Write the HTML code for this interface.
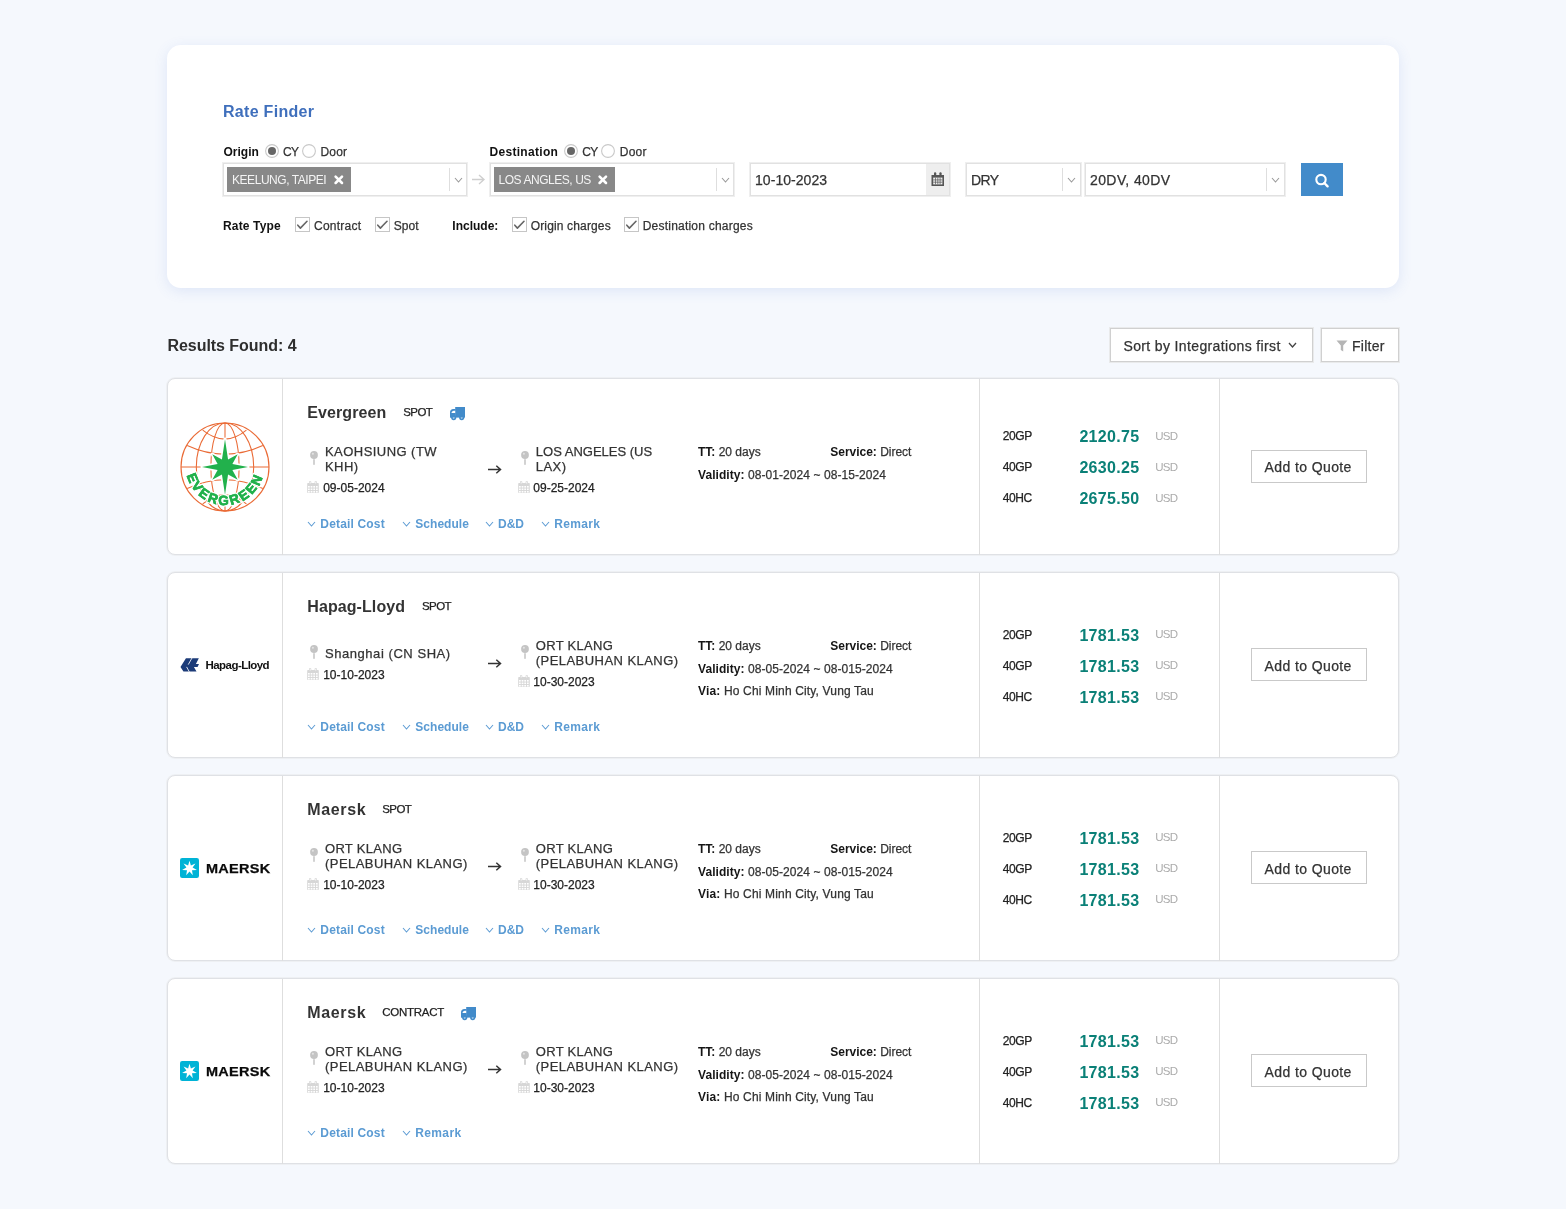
<!DOCTYPE html>
<html><head><meta charset="utf-8"><title>Rate Finder</title>
<style>
html,body{margin:0;padding:0;}
body{width:1566px;height:1209px;background:#f5f8fd;position:relative;overflow:hidden;font-family:"Liberation Sans", sans-serif;}
.t{position:absolute;white-space:nowrap;font-family:"Liberation Sans", sans-serif;}
.r{-webkit-text-stroke:0.25px currentColor;}
.r b{-webkit-text-stroke:0;}
.t b{color:#151515;}
svg{overflow:visible;}
</style></head><body>
<div style="position:absolute;left:0;top:0;width:1566px;height:1209px;will-change:transform"><div style="position:absolute;left:167px;top:45px;width:1232px;height:243px;background:#fff;border-radius:14px;box-shadow:0 3px 14px rgba(70,110,210,0.13);"></div><div class="t" style="left:223.00px;top:103.96px;font-size:16px;line-height:16px;font-weight:700;color:#3f6fbc;letter-spacing:0.3px;">Rate Finder</div><div class="t" style="left:223.50px;top:146.04px;font-size:12px;line-height:12px;font-weight:700;color:#111;">Origin</div><svg style="position:absolute;left:265px;top:143.7px" width="14" height="14" viewBox="0 0 14 14"><circle cx="7" cy="7" r="6.4" fill="#fff" stroke="#c9c9c9" stroke-width="1.1"/><circle cx="7" cy="7" r="4" fill="#666"/></svg><div class="t r" style="left:283.00px;top:146.04px;font-size:12px;line-height:12px;font-weight:400;color:#333;letter-spacing:-0.6px;">CY</div><svg style="position:absolute;left:302px;top:143.7px" width="14" height="14" viewBox="0 0 14 14"><circle cx="7" cy="7" r="6.4" fill="#fff" stroke="#c9c9c9" stroke-width="1.1"/></svg><div class="t r" style="left:320.50px;top:146.04px;font-size:12px;line-height:12px;font-weight:400;color:#333;letter-spacing:0.2px;">Door</div><div class="t" style="left:489.50px;top:146.04px;font-size:12px;line-height:12px;font-weight:700;color:#111;letter-spacing:0.3px;">Destination</div><svg style="position:absolute;left:564.2px;top:143.7px" width="14" height="14" viewBox="0 0 14 14"><circle cx="7" cy="7" r="6.4" fill="#fff" stroke="#c9c9c9" stroke-width="1.1"/><circle cx="7" cy="7" r="4" fill="#666"/></svg><div class="t r" style="left:582.30px;top:146.04px;font-size:12px;line-height:12px;font-weight:400;color:#333;letter-spacing:-0.6px;">CY</div><svg style="position:absolute;left:601.3px;top:143.7px" width="14" height="14" viewBox="0 0 14 14"><circle cx="7" cy="7" r="6.4" fill="#fff" stroke="#c9c9c9" stroke-width="1.1"/></svg><div class="t r" style="left:619.80px;top:146.04px;font-size:12px;line-height:12px;font-weight:400;color:#333;letter-spacing:0.2px;">Door</div><div style="position:absolute;left:223px;top:163px;width:244px;height:33px;box-sizing:border-box;border:1px solid #e1e1e1;box-shadow:0 0 0 1px #efefef;background:#fff;"></div><div style="position:absolute;left:449px;top:168.0px;width:1px;height:23px;background:#dedede;"></div><svg style="position:absolute;left:454px;top:176.8px" width="9" height="6" viewBox="0 0 9 6"><polyline points="1,1 4.5,5 8,1" fill="none" stroke="#9a9a9a" stroke-width="1.1"/></svg><div style="position:absolute;left:227px;top:166.5px;width:124px;height:25.5px;background:#888;"></div><div class="t" style="left:232.00px;top:174.44px;font-size:12px;line-height:12px;font-weight:400;color:#f4f4f4;letter-spacing:-0.45px;">KEELUNG, TAIPEI</div><svg style="position:absolute;left:334.2px;top:175.4px" width="9.6" height="9.6" viewBox="0 0 9.6 9.6"><path d="M1.6,1.6 L8.0,8.0 M8.0,1.6 L1.6,8.0" stroke="#fff" stroke-width="2.6" stroke-linecap="round"/></svg><svg style="position:absolute;left:470px;top:173px" width="17" height="13" viewBox="0 0 17 13"><path d="M2,6.5 H14 M9,2 L14,6.5 L9,11" fill="none" stroke="#cfcfcf" stroke-width="1.4"/></svg><div style="position:absolute;left:490px;top:163px;width:244px;height:33px;box-sizing:border-box;border:1px solid #e1e1e1;box-shadow:0 0 0 1px #efefef;background:#fff;"></div><div style="position:absolute;left:716px;top:168.0px;width:1px;height:23px;background:#dedede;"></div><svg style="position:absolute;left:721px;top:176.8px" width="9" height="6" viewBox="0 0 9 6"><polyline points="1,1 4.5,5 8,1" fill="none" stroke="#9a9a9a" stroke-width="1.1"/></svg><div style="position:absolute;left:494px;top:166.5px;width:120.5px;height:25.5px;background:#888;"></div><div class="t" style="left:498.50px;top:174.44px;font-size:12px;line-height:12px;font-weight:400;color:#f4f4f4;letter-spacing:-0.45px;">LOS ANGLES, US</div><svg style="position:absolute;left:597.6px;top:175.4px" width="9.6" height="9.6" viewBox="0 0 9.6 9.6"><path d="M1.6,1.6 L8.0,8.0 M8.0,1.6 L1.6,8.0" stroke="#fff" stroke-width="2.6" stroke-linecap="round"/></svg><div style="position:absolute;left:750px;top:163px;width:200px;height:33px;box-sizing:border-box;border:1px solid #e1e1e1;box-shadow:0 0 0 1px #efefef;background:#fff;"></div><div style="position:absolute;left:926px;top:164px;width:23px;height:31px;background:#eeeeee;"></div><div class="t r" style="left:755.00px;top:172.75px;font-size:14px;line-height:14px;font-weight:400;color:#333;letter-spacing:0.05px;">10-10-2023</div><svg style="position:absolute;left:931.3px;top:172px" width="14" height="15" viewBox="0 0 14 15"><path d="M0.5,3 H13 V14 H0.5 Z" fill="#555"/><rect x="2.2" y="5.6" width="9.2" height="6.8" fill="#eee"/><path d="M2.2,7.9 H11.4 M2.2,10.2 H11.4 M4.5,5.6 V12.4 M6.8,5.6 V12.4 M9.1,5.6 V12.4" stroke="#555" stroke-width="0.7"/><rect x="3" y="0.3" width="2.2" height="3.6" rx="1" fill="#555"/><rect x="8.4" y="0.3" width="2.2" height="3.6" rx="1" fill="#555"/></svg><div style="position:absolute;left:966px;top:163px;width:115px;height:33px;box-sizing:border-box;border:1px solid #e1e1e1;box-shadow:0 0 0 1px #efefef;background:#fff;"></div><div style="position:absolute;left:1062px;top:168.0px;width:1px;height:23px;background:#dedede;"></div><svg style="position:absolute;left:1067px;top:176.8px" width="9" height="6" viewBox="0 0 9 6"><polyline points="1,1 4.5,5 8,1" fill="none" stroke="#9a9a9a" stroke-width="1.1"/></svg><div class="t r" style="left:971.00px;top:173.15px;font-size:14px;line-height:14px;font-weight:400;color:#333;letter-spacing:-0.6px;">DRY</div><div style="position:absolute;left:1085px;top:163px;width:200px;height:33px;box-sizing:border-box;border:1px solid #e1e1e1;box-shadow:0 0 0 1px #efefef;background:#fff;"></div><div style="position:absolute;left:1266px;top:168.0px;width:1px;height:23px;background:#dedede;"></div><svg style="position:absolute;left:1271px;top:176.8px" width="9" height="6" viewBox="0 0 9 6"><polyline points="1,1 4.5,5 8,1" fill="none" stroke="#9a9a9a" stroke-width="1.1"/></svg><div class="t r" style="left:1090.00px;top:173.15px;font-size:14px;line-height:14px;font-weight:400;color:#333;letter-spacing:0.4px;">20DV, 40DV</div><div style="position:absolute;left:1301px;top:163.3px;width:42px;height:33px;background:#428bca;"></div><svg style="position:absolute;left:1312px;top:171px" width="20" height="20" viewBox="0 0 20 20"><circle cx="9" cy="8.6" r="4.7" fill="none" stroke="#fff" stroke-width="2.1"/><path d="M12.3,12 L15.6,15.3" stroke="#fff" stroke-width="2.4" stroke-linecap="round"/></svg><div class="t" style="left:223.00px;top:219.84px;font-size:12px;line-height:12px;font-weight:700;color:#111;letter-spacing:0.15px;">Rate Type</div><svg style="position:absolute;left:294.8px;top:216.8px" width="15" height="15" viewBox="0 0 15 15"><rect x="0.5" y="0.5" width="14" height="14" fill="#fff" stroke="#c6c6c6" stroke-width="1"/><polyline points="2.8,8.2 5.4,11.1 12,4.3" fill="none" stroke="#666" stroke-width="1.6" stroke-linecap="round" stroke-linejoin="round"/></svg><div class="t r" style="left:314.00px;top:219.84px;font-size:12px;line-height:12px;font-weight:400;color:#333;letter-spacing:0.25px;">Contract</div><svg style="position:absolute;left:374.8px;top:216.8px" width="15" height="15" viewBox="0 0 15 15"><rect x="0.5" y="0.5" width="14" height="14" fill="#fff" stroke="#c6c6c6" stroke-width="1"/><polyline points="2.8,8.2 5.4,11.1 12,4.3" fill="none" stroke="#666" stroke-width="1.6" stroke-linecap="round" stroke-linejoin="round"/></svg><div class="t r" style="left:393.80px;top:219.84px;font-size:12px;line-height:12px;font-weight:400;color:#333;">Spot</div><div class="t" style="left:452.30px;top:219.84px;font-size:12px;line-height:12px;font-weight:700;color:#111;">Include:</div><svg style="position:absolute;left:512px;top:216.8px" width="15" height="15" viewBox="0 0 15 15"><rect x="0.5" y="0.5" width="14" height="14" fill="#fff" stroke="#c6c6c6" stroke-width="1"/><polyline points="2.8,8.2 5.4,11.1 12,4.3" fill="none" stroke="#666" stroke-width="1.6" stroke-linecap="round" stroke-linejoin="round"/></svg><div class="t r" style="left:530.70px;top:219.84px;font-size:12px;line-height:12px;font-weight:400;color:#333;letter-spacing:0.15px;">Origin charges</div><svg style="position:absolute;left:624px;top:216.8px" width="15" height="15" viewBox="0 0 15 15"><rect x="0.5" y="0.5" width="14" height="14" fill="#fff" stroke="#c6c6c6" stroke-width="1"/><polyline points="2.8,8.2 5.4,11.1 12,4.3" fill="none" stroke="#666" stroke-width="1.6" stroke-linecap="round" stroke-linejoin="round"/></svg><div class="t r" style="left:642.70px;top:219.84px;font-size:12px;line-height:12px;font-weight:400;color:#333;letter-spacing:0.22px;">Destination charges</div><div class="t" style="left:167.50px;top:338.06px;font-size:16px;line-height:16px;font-weight:700;color:#2e2e2e;letter-spacing:-0.05px;">Results Found: 4</div><div style="position:absolute;left:1110px;top:328px;width:203px;height:34px;box-sizing:border-box;border:1px solid #d0d0d0;box-shadow:0 0 0 1px #e9eaeb;background:#fff;"></div><div class="t r" style="left:1123.50px;top:338.95px;font-size:14px;line-height:14px;font-weight:400;color:#333;letter-spacing:0.36px;">Sort by Integrations first</div><svg style="position:absolute;left:1287.5px;top:341.5px" width="9" height="6" viewBox="0 0 9 6"><polyline points="1,1 4.5,5 8,1" fill="none" stroke="#444" stroke-width="1.3"/></svg><div style="position:absolute;left:1321px;top:328px;width:78px;height:34px;box-sizing:border-box;border:1px solid #d0d0d0;box-shadow:0 0 0 1px #e9eaeb;background:#fff;"></div><svg style="position:absolute;left:1336px;top:340px" width="12" height="12" viewBox="0 0 12 12"><path d="M0.5,0.5 H11.5 L7.2,5.5 V11.5 L4.8,10 V5.5 Z" fill="#b5b5b5"/></svg><div class="t r" style="left:1352.00px;top:338.95px;font-size:14px;line-height:14px;font-weight:400;color:#333;letter-spacing:0.25px;">Filter</div><div style="position:absolute;left:167px;top:378px;width:1232px;height:177px;box-sizing:border-box;background:#fff;border:1px solid #dfe1e5;border-radius:8px;box-shadow:0 0 0 1px #eef0f3;"></div><div style="position:absolute;left:282px;top:379px;width:1px;height:176px;background:#dedede;"></div><div style="position:absolute;left:979px;top:379px;width:1px;height:176px;background:#dedede;"></div><div style="position:absolute;left:1219px;top:379px;width:1px;height:176px;background:#dedede;"></div><svg style="position:absolute;left:175px;top:417.0px" width="100" height="100" viewBox="0 0 100 100"><circle cx="50" cy="50" r="44" fill="#fff" stroke="#ea6a35" stroke-width="1.15"/><ellipse cx="50" cy="50" rx="28.7" ry="44" fill="none" stroke="#ea6a35" stroke-width="1.05"/><ellipse cx="50" cy="50" rx="14.1" ry="44" fill="none" stroke="#ea6a35" stroke-width="1.05"/><path d="M50,6 V94" fill="none" stroke="#ea6a35" stroke-width="1.05"/><path d="M6,50 H94" fill="none" stroke="#ea6a35" stroke-width="1.05"/><path d="M27.7,13.2 Q50,31 71.4,13.2" fill="none" stroke="#ea6a35" stroke-width="1.05"/><path d="M12.2,28.6 Q50,46 87.8,28.6" fill="none" stroke="#ea6a35" stroke-width="1.05"/><path d="M12.2,71.4 Q50,54 87.8,71.4" fill="none" stroke="#ea6a35" stroke-width="1.05"/><path d="M27.7,86.8 Q50,69 71.4,86.8" fill="none" stroke="#ea6a35" stroke-width="1.05"/><polygon points="50.00,22.20 46.94,42.61 37.27,37.27 42.61,46.94 27.00,50.00 42.61,53.06 37.27,62.73 46.94,57.39 50.00,77.80 53.06,57.39 62.73,62.73 57.39,53.06 73.00,50.00 57.39,46.94 62.73,37.27 53.06,42.61" fill="#fff" stroke="#fff" stroke-width="3.2" stroke-linejoin="round"/><polygon points="50.00,22.20 46.94,42.61 37.27,37.27 42.61,46.94 27.00,50.00 42.61,53.06 37.27,62.73 46.94,57.39 50.00,77.80 53.06,57.39 62.73,62.73 57.39,53.06 73.00,50.00 57.39,46.94 62.73,37.27 53.06,42.61" fill="#22b14c"/><defs><path id="evarc" d="M11.6,56.8 A39.2,39.2 0 0 0 88.4,56.8"/></defs><text font-family="Liberation Sans" font-weight="700" font-size="13.5" fill="#22b14c" stroke="#fff" stroke-width="3" paint-order="stroke" letter-spacing="2.1"><textPath href="#evarc" startOffset="50%" text-anchor="middle">EVERGREEN</textPath></text><text font-family="Liberation Sans" font-weight="700" font-size="13.5" fill="#22b14c" stroke="#22b14c" stroke-width="0.7" letter-spacing="2.1"><textPath href="#evarc" startOffset="50%" text-anchor="middle">EVERGREEN</textPath></text></svg><div class="t" style="left:307.30px;top:405.06px;font-size:16px;line-height:16px;font-weight:700;color:#333;letter-spacing:0.09px;">Evergreen</div><div class="t r" style="left:403.20px;top:407.07px;font-size:11.5px;line-height:11.5px;font-weight:400;color:#222;letter-spacing:-0.55px;">SPOT</div><svg style="position:absolute;left:450.0px;top:407px" width="15" height="13.5" viewBox="0 0 15 13.5"><path d="M5.2,0 H15 V10 H5.2 Z" fill="#428bca"/><path d="M0,10.2 V5.6 Q0,2.4 3.4,2.1 H5.6 V10.2 Z" fill="#428bca"/><path d="M1.4,5.9 Q1.8,4 3.6,3.8 H5.2 V5.9 Z" fill="#fff"/><circle cx="3.7" cy="10.6" r="2.6" fill="#428bca"/><circle cx="11.7" cy="10.6" r="2.6" fill="#428bca"/><circle cx="3.7" cy="10.6" r="1" fill="#fff"/><circle cx="11.7" cy="10.6" r="1" fill="#fff"/><rect x="0" y="9" width="15" height="1.6" fill="#428bca"/></svg><div class="t r" style="left:325.00px;top:445.20px;font-size:13px;line-height:13px;font-weight:400;color:#333;letter-spacing:0.45px;">KAOHSIUNG (TW</div><div class="t r" style="left:325.00px;top:459.90px;font-size:13px;line-height:13px;font-weight:400;color:#333;letter-spacing:0.45px;">KHH)</div><svg style="position:absolute;left:309.9px;top:451.4px" width="8" height="14" viewBox="0 0 8 14"><circle cx="4" cy="4" r="3.9" fill="#c4c4c4"/><circle cx="2.9" cy="2.8" r="1" fill="#e4e4e4"/><rect x="3.2" y="8.2" width="1.6" height="5.6" fill="#c8c8c8"/></svg><svg style="position:absolute;left:307.2px;top:481px" width="12" height="12.5" viewBox="0 0 12 12.5"><rect x="0.2" y="2" width="11.6" height="10" rx="0.8" fill="#d7d7d7"/><rect x="1.0" y="5.0" width="1.75" height="1.6" fill="#fff"/><rect x="1.0" y="7.5" width="1.75" height="1.6" fill="#fff"/><rect x="1.0" y="10.0" width="1.75" height="1.6" fill="#fff"/><rect x="3.65" y="5.0" width="1.75" height="1.6" fill="#fff"/><rect x="3.65" y="7.5" width="1.75" height="1.6" fill="#fff"/><rect x="3.65" y="10.0" width="1.75" height="1.6" fill="#fff"/><rect x="6.3" y="5.0" width="1.75" height="1.6" fill="#fff"/><rect x="6.3" y="7.5" width="1.75" height="1.6" fill="#fff"/><rect x="6.3" y="10.0" width="1.75" height="1.6" fill="#fff"/><rect x="8.95" y="5.0" width="1.75" height="1.6" fill="#fff"/><rect x="8.95" y="7.5" width="1.75" height="1.6" fill="#fff"/><rect x="8.95" y="10.0" width="1.75" height="1.6" fill="#fff"/><rect x="2" y="0" width="2.3" height="3.6" rx="1.1" fill="#d7d7d7"/><rect x="7.6" y="0" width="2.3" height="3.6" rx="1.1" fill="#d7d7d7"/><rect x="2.75" y="0.7" width="0.8" height="1.8" fill="#fff"/><rect x="8.35" y="0.7" width="0.8" height="1.8" fill="#fff"/></svg><div class="t r" style="left:323.20px;top:482.34px;font-size:12px;line-height:12px;font-weight:400;color:#222;">09-05-2024</div><svg style="position:absolute;left:487px;top:464.5px" width="15" height="9" viewBox="0 0 15 9"><path d="M1,4.5 H13.5 M9.3,0.8 L13.5,4.5 L9.3,8.2" fill="none" stroke="#333" stroke-width="1.5"/></svg><div class="t r" style="left:535.80px;top:445.20px;font-size:13px;line-height:13px;font-weight:400;color:#333;">LOS ANGELES (US</div><div class="t r" style="left:535.80px;top:459.90px;font-size:13px;line-height:13px;font-weight:400;color:#333;letter-spacing:0.45px;">LAX)</div><svg style="position:absolute;left:520.5px;top:451.4px" width="8" height="14" viewBox="0 0 8 14"><circle cx="4" cy="4" r="3.9" fill="#c4c4c4"/><circle cx="2.9" cy="2.8" r="1" fill="#e4e4e4"/><rect x="3.2" y="8.2" width="1.6" height="5.6" fill="#c8c8c8"/></svg><svg style="position:absolute;left:518.2px;top:481px" width="12" height="12.5" viewBox="0 0 12 12.5"><rect x="0.2" y="2" width="11.6" height="10" rx="0.8" fill="#d7d7d7"/><rect x="1.0" y="5.0" width="1.75" height="1.6" fill="#fff"/><rect x="1.0" y="7.5" width="1.75" height="1.6" fill="#fff"/><rect x="1.0" y="10.0" width="1.75" height="1.6" fill="#fff"/><rect x="3.65" y="5.0" width="1.75" height="1.6" fill="#fff"/><rect x="3.65" y="7.5" width="1.75" height="1.6" fill="#fff"/><rect x="3.65" y="10.0" width="1.75" height="1.6" fill="#fff"/><rect x="6.3" y="5.0" width="1.75" height="1.6" fill="#fff"/><rect x="6.3" y="7.5" width="1.75" height="1.6" fill="#fff"/><rect x="6.3" y="10.0" width="1.75" height="1.6" fill="#fff"/><rect x="8.95" y="5.0" width="1.75" height="1.6" fill="#fff"/><rect x="8.95" y="7.5" width="1.75" height="1.6" fill="#fff"/><rect x="8.95" y="10.0" width="1.75" height="1.6" fill="#fff"/><rect x="2" y="0" width="2.3" height="3.6" rx="1.1" fill="#d7d7d7"/><rect x="7.6" y="0" width="2.3" height="3.6" rx="1.1" fill="#d7d7d7"/><rect x="2.75" y="0.7" width="0.8" height="1.8" fill="#fff"/><rect x="8.35" y="0.7" width="0.8" height="1.8" fill="#fff"/></svg><div class="t r" style="left:533.30px;top:482.34px;font-size:12px;line-height:12px;font-weight:400;color:#222;">09-25-2024</div><div class="t r" style="left:698.00px;top:445.54px;font-size:12px;line-height:12px;font-weight:400;color:#333;"><b>TT:</b> 20 days</div><div class="t r" style="left:830.30px;top:445.54px;font-size:12px;line-height:12px;font-weight:400;color:#333;letter-spacing:-0.02px;"><b>Service:</b> Direct</div><div class="t r" style="left:698.00px;top:468.54px;font-size:12px;line-height:12px;font-weight:400;color:#333;letter-spacing:0.065px;"><b>Validity:</b> 08-01-2024 ~ 08-15-2024</div><svg style="position:absolute;left:307.1px;top:520.8px" width="9" height="6" viewBox="0 0 9 6"><polyline points="1,1 4.5,5 8,1" fill="none" stroke="#5d9cd4" stroke-width="1.05"/></svg><div class="t" style="left:320.30px;top:518.34px;font-size:12px;line-height:12px;font-weight:700;color:#5b9bd3;letter-spacing:0.17px;">Detail Cost</div><svg style="position:absolute;left:402.1px;top:520.8px" width="9" height="6" viewBox="0 0 9 6"><polyline points="1,1 4.5,5 8,1" fill="none" stroke="#5d9cd4" stroke-width="1.05"/></svg><div class="t" style="left:415.30px;top:518.34px;font-size:12px;line-height:12px;font-weight:700;color:#5b9bd3;letter-spacing:0.03px;">Schedule</div><svg style="position:absolute;left:484.8px;top:520.8px" width="9" height="6" viewBox="0 0 9 6"><polyline points="1,1 4.5,5 8,1" fill="none" stroke="#5d9cd4" stroke-width="1.05"/></svg><div class="t" style="left:498.00px;top:518.34px;font-size:12px;line-height:12px;font-weight:700;color:#5b9bd3;">D&amp;D</div><svg style="position:absolute;left:541.0px;top:520.8px" width="9" height="6" viewBox="0 0 9 6"><polyline points="1,1 4.5,5 8,1" fill="none" stroke="#5d9cd4" stroke-width="1.05"/></svg><div class="t" style="left:554.20px;top:518.34px;font-size:12px;line-height:12px;font-weight:700;color:#5b9bd3;letter-spacing:0.35px;">Remark</div><div class="t r" style="left:1002.80px;top:430.34px;font-size:12px;line-height:12px;font-weight:400;color:#222;letter-spacing:-0.45px;">20GP</div><div class="t" style="left:1079.40px;top:429.06px;font-size:16px;line-height:16px;font-weight:700;color:#0a8077;letter-spacing:0.3px;">2120.75</div><div class="t" style="left:1155.30px;top:430.77px;font-size:11.5px;line-height:11.5px;font-weight:400;color:#ababab;letter-spacing:-0.75px;">USD</div><div class="t r" style="left:1002.80px;top:461.34px;font-size:12px;line-height:12px;font-weight:400;color:#222;letter-spacing:-0.45px;">40GP</div><div class="t" style="left:1079.40px;top:460.06px;font-size:16px;line-height:16px;font-weight:700;color:#0a8077;letter-spacing:0.3px;">2630.25</div><div class="t" style="left:1155.30px;top:461.77px;font-size:11.5px;line-height:11.5px;font-weight:400;color:#ababab;letter-spacing:-0.75px;">USD</div><div class="t r" style="left:1002.80px;top:492.34px;font-size:12px;line-height:12px;font-weight:400;color:#222;letter-spacing:-0.45px;">40HC</div><div class="t" style="left:1079.40px;top:491.06px;font-size:16px;line-height:16px;font-weight:700;color:#0a8077;letter-spacing:0.3px;">2675.50</div><div class="t" style="left:1155.30px;top:492.77px;font-size:11.5px;line-height:11.5px;font-weight:400;color:#ababab;letter-spacing:-0.75px;">USD</div><div style="position:absolute;left:1250.5px;top:450px;width:116px;height:33px;box-sizing:border-box;border:1.5px solid #c9c9c9;background:#fff;"></div><div class="t r" style="left:1264.50px;top:460.35px;font-size:14px;line-height:14px;font-weight:400;color:#333;letter-spacing:0.4px;">Add to Quote</div><div style="position:absolute;left:167px;top:572px;width:1232px;height:186px;box-sizing:border-box;background:#fff;border:1px solid #dfe1e5;border-radius:8px;box-shadow:0 0 0 1px #eef0f3;"></div><div style="position:absolute;left:282px;top:573px;width:1px;height:185px;background:#dedede;"></div><div style="position:absolute;left:979px;top:573px;width:1px;height:185px;background:#dedede;"></div><div style="position:absolute;left:1219px;top:573px;width:1px;height:185px;background:#dedede;"></div><svg style="position:absolute;left:178px;top:655.0px" width="24" height="20" viewBox="0 0 24 20"><path d="M7.94,3.14 L20.84,3.14 L17.9,8.9 L21.0,8.9 L19.5,11.9 L15.9,11.9 L18.5,16.5 L5.46,16.5 L2.48,11.9 Z" fill="#1c3b78"/><path d="M14.1,2.8 L10.25,9.6 M8.6,11.9 L11.3,16.8" stroke="#fff" stroke-width="0.85"/></svg><div class="t" style="left:205.50px;top:660.27px;font-size:11.5px;line-height:11.5px;font-weight:700;color:#111;letter-spacing:-0.55px;">Hapag-Lloyd</div><div class="t" style="left:307.30px;top:599.06px;font-size:16px;line-height:16px;font-weight:700;color:#333;letter-spacing:0.08px;">Hapag-Lloyd</div><div class="t r" style="left:421.90px;top:601.07px;font-size:11.5px;line-height:11.5px;font-weight:400;color:#222;letter-spacing:-0.55px;">SPOT</div><div class="t r" style="left:325.00px;top:646.80px;font-size:13px;line-height:13px;font-weight:400;color:#333;letter-spacing:0.55px;">Shanghai (CN SHA)</div><svg style="position:absolute;left:309.9px;top:645.4px" width="8" height="14" viewBox="0 0 8 14"><circle cx="4" cy="4" r="3.9" fill="#c4c4c4"/><circle cx="2.9" cy="2.8" r="1" fill="#e4e4e4"/><rect x="3.2" y="8.2" width="1.6" height="5.6" fill="#c8c8c8"/></svg><svg style="position:absolute;left:307.2px;top:668px" width="12" height="12.5" viewBox="0 0 12 12.5"><rect x="0.2" y="2" width="11.6" height="10" rx="0.8" fill="#d7d7d7"/><rect x="1.0" y="5.0" width="1.75" height="1.6" fill="#fff"/><rect x="1.0" y="7.5" width="1.75" height="1.6" fill="#fff"/><rect x="1.0" y="10.0" width="1.75" height="1.6" fill="#fff"/><rect x="3.65" y="5.0" width="1.75" height="1.6" fill="#fff"/><rect x="3.65" y="7.5" width="1.75" height="1.6" fill="#fff"/><rect x="3.65" y="10.0" width="1.75" height="1.6" fill="#fff"/><rect x="6.3" y="5.0" width="1.75" height="1.6" fill="#fff"/><rect x="6.3" y="7.5" width="1.75" height="1.6" fill="#fff"/><rect x="6.3" y="10.0" width="1.75" height="1.6" fill="#fff"/><rect x="8.95" y="5.0" width="1.75" height="1.6" fill="#fff"/><rect x="8.95" y="7.5" width="1.75" height="1.6" fill="#fff"/><rect x="8.95" y="10.0" width="1.75" height="1.6" fill="#fff"/><rect x="2" y="0" width="2.3" height="3.6" rx="1.1" fill="#d7d7d7"/><rect x="7.6" y="0" width="2.3" height="3.6" rx="1.1" fill="#d7d7d7"/><rect x="2.75" y="0.7" width="0.8" height="1.8" fill="#fff"/><rect x="8.35" y="0.7" width="0.8" height="1.8" fill="#fff"/></svg><div class="t r" style="left:323.20px;top:669.34px;font-size:12px;line-height:12px;font-weight:400;color:#222;">10-10-2023</div><svg style="position:absolute;left:487px;top:658.5px" width="15" height="9" viewBox="0 0 15 9"><path d="M1,4.5 H13.5 M9.3,0.8 L13.5,4.5 L9.3,8.2" fill="none" stroke="#333" stroke-width="1.5"/></svg><div class="t r" style="left:535.80px;top:639.20px;font-size:13px;line-height:13px;font-weight:400;color:#333;letter-spacing:0.3px;">ORT KLANG</div><div class="t r" style="left:535.80px;top:653.90px;font-size:13px;line-height:13px;font-weight:400;color:#333;letter-spacing:0.45px;">(PELABUHAN KLANG)</div><svg style="position:absolute;left:520.5px;top:645.4px" width="8" height="14" viewBox="0 0 8 14"><circle cx="4" cy="4" r="3.9" fill="#c4c4c4"/><circle cx="2.9" cy="2.8" r="1" fill="#e4e4e4"/><rect x="3.2" y="8.2" width="1.6" height="5.6" fill="#c8c8c8"/></svg><svg style="position:absolute;left:518.2px;top:675px" width="12" height="12.5" viewBox="0 0 12 12.5"><rect x="0.2" y="2" width="11.6" height="10" rx="0.8" fill="#d7d7d7"/><rect x="1.0" y="5.0" width="1.75" height="1.6" fill="#fff"/><rect x="1.0" y="7.5" width="1.75" height="1.6" fill="#fff"/><rect x="1.0" y="10.0" width="1.75" height="1.6" fill="#fff"/><rect x="3.65" y="5.0" width="1.75" height="1.6" fill="#fff"/><rect x="3.65" y="7.5" width="1.75" height="1.6" fill="#fff"/><rect x="3.65" y="10.0" width="1.75" height="1.6" fill="#fff"/><rect x="6.3" y="5.0" width="1.75" height="1.6" fill="#fff"/><rect x="6.3" y="7.5" width="1.75" height="1.6" fill="#fff"/><rect x="6.3" y="10.0" width="1.75" height="1.6" fill="#fff"/><rect x="8.95" y="5.0" width="1.75" height="1.6" fill="#fff"/><rect x="8.95" y="7.5" width="1.75" height="1.6" fill="#fff"/><rect x="8.95" y="10.0" width="1.75" height="1.6" fill="#fff"/><rect x="2" y="0" width="2.3" height="3.6" rx="1.1" fill="#d7d7d7"/><rect x="7.6" y="0" width="2.3" height="3.6" rx="1.1" fill="#d7d7d7"/><rect x="2.75" y="0.7" width="0.8" height="1.8" fill="#fff"/><rect x="8.35" y="0.7" width="0.8" height="1.8" fill="#fff"/></svg><div class="t r" style="left:533.30px;top:676.34px;font-size:12px;line-height:12px;font-weight:400;color:#222;">10-30-2023</div><div class="t r" style="left:698.00px;top:639.54px;font-size:12px;line-height:12px;font-weight:400;color:#333;"><b>TT:</b> 20 days</div><div class="t r" style="left:830.30px;top:639.54px;font-size:12px;line-height:12px;font-weight:400;color:#333;letter-spacing:-0.02px;"><b>Service:</b> Direct</div><div class="t r" style="left:698.00px;top:662.54px;font-size:12px;line-height:12px;font-weight:400;color:#333;letter-spacing:0.065px;"><b>Validity:</b> 08-05-2024 ~ 08-015-2024</div><div class="t r" style="left:698.00px;top:685.14px;font-size:12px;line-height:12px;font-weight:400;color:#333;letter-spacing:0.16px;"><b>Via:</b> Ho Chi Minh City, Vung Tau</div><svg style="position:absolute;left:307.1px;top:723.8px" width="9" height="6" viewBox="0 0 9 6"><polyline points="1,1 4.5,5 8,1" fill="none" stroke="#5d9cd4" stroke-width="1.05"/></svg><div class="t" style="left:320.30px;top:721.34px;font-size:12px;line-height:12px;font-weight:700;color:#5b9bd3;letter-spacing:0.17px;">Detail Cost</div><svg style="position:absolute;left:402.1px;top:723.8px" width="9" height="6" viewBox="0 0 9 6"><polyline points="1,1 4.5,5 8,1" fill="none" stroke="#5d9cd4" stroke-width="1.05"/></svg><div class="t" style="left:415.30px;top:721.34px;font-size:12px;line-height:12px;font-weight:700;color:#5b9bd3;letter-spacing:0.03px;">Schedule</div><svg style="position:absolute;left:484.8px;top:723.8px" width="9" height="6" viewBox="0 0 9 6"><polyline points="1,1 4.5,5 8,1" fill="none" stroke="#5d9cd4" stroke-width="1.05"/></svg><div class="t" style="left:498.00px;top:721.34px;font-size:12px;line-height:12px;font-weight:700;color:#5b9bd3;">D&amp;D</div><svg style="position:absolute;left:541.0px;top:723.8px" width="9" height="6" viewBox="0 0 9 6"><polyline points="1,1 4.5,5 8,1" fill="none" stroke="#5d9cd4" stroke-width="1.05"/></svg><div class="t" style="left:554.20px;top:721.34px;font-size:12px;line-height:12px;font-weight:700;color:#5b9bd3;letter-spacing:0.35px;">Remark</div><div class="t r" style="left:1002.80px;top:628.84px;font-size:12px;line-height:12px;font-weight:400;color:#222;letter-spacing:-0.45px;">20GP</div><div class="t" style="left:1079.40px;top:627.56px;font-size:16px;line-height:16px;font-weight:700;color:#0a8077;letter-spacing:0.3px;">1781.53</div><div class="t" style="left:1155.30px;top:629.27px;font-size:11.5px;line-height:11.5px;font-weight:400;color:#ababab;letter-spacing:-0.75px;">USD</div><div class="t r" style="left:1002.80px;top:659.84px;font-size:12px;line-height:12px;font-weight:400;color:#222;letter-spacing:-0.45px;">40GP</div><div class="t" style="left:1079.40px;top:658.56px;font-size:16px;line-height:16px;font-weight:700;color:#0a8077;letter-spacing:0.3px;">1781.53</div><div class="t" style="left:1155.30px;top:660.27px;font-size:11.5px;line-height:11.5px;font-weight:400;color:#ababab;letter-spacing:-0.75px;">USD</div><div class="t r" style="left:1002.80px;top:690.84px;font-size:12px;line-height:12px;font-weight:400;color:#222;letter-spacing:-0.45px;">40HC</div><div class="t" style="left:1079.40px;top:689.56px;font-size:16px;line-height:16px;font-weight:700;color:#0a8077;letter-spacing:0.3px;">1781.53</div><div class="t" style="left:1155.30px;top:691.27px;font-size:11.5px;line-height:11.5px;font-weight:400;color:#ababab;letter-spacing:-0.75px;">USD</div><div style="position:absolute;left:1250.5px;top:648px;width:116px;height:33px;box-sizing:border-box;border:1.5px solid #c9c9c9;background:#fff;"></div><div class="t r" style="left:1264.50px;top:658.85px;font-size:14px;line-height:14px;font-weight:400;color:#333;letter-spacing:0.4px;">Add to Quote</div><div style="position:absolute;left:167px;top:775px;width:1232px;height:186px;box-sizing:border-box;background:#fff;border:1px solid #dfe1e5;border-radius:8px;box-shadow:0 0 0 1px #eef0f3;"></div><div style="position:absolute;left:282px;top:776px;width:1px;height:185px;background:#dedede;"></div><div style="position:absolute;left:979px;top:776px;width:1px;height:185px;background:#dedede;"></div><div style="position:absolute;left:1219px;top:776px;width:1px;height:185px;background:#dedede;"></div><svg style="position:absolute;left:179.8px;top:858.0px" width="19" height="20" viewBox="0 0 19 20"><rect x="0" y="0" width="19" height="20" rx="2.2" fill="#00b3d6"/><polygon points="9.50,2.70 8.11,7.42 3.56,5.56 6.38,9.59 2.09,11.99 7.00,12.30 6.20,17.15 9.50,13.50 12.80,17.15 12.00,12.30 16.91,11.99 12.62,9.59 15.44,5.56 10.89,7.42" fill="#fff"/></svg><div class="t" style="left:206.30px;top:862.73px;font-size:12.6px;line-height:12.6px;font-weight:700;color:#0a0a0a;letter-spacing:0.25px;transform:scaleX(1.15);transform-origin:0 100%;-webkit-text-stroke:0.25px #0a0a0a;">MAERSK</div><div class="t" style="left:307.30px;top:802.06px;font-size:16px;line-height:16px;font-weight:700;color:#333;letter-spacing:0.65px;">Maersk</div><div class="t r" style="left:382.20px;top:804.07px;font-size:11.5px;line-height:11.5px;font-weight:400;color:#222;letter-spacing:-0.55px;">SPOT</div><div class="t r" style="left:325.00px;top:842.20px;font-size:13px;line-height:13px;font-weight:400;color:#333;letter-spacing:0.3px;">ORT KLANG</div><div class="t r" style="left:325.00px;top:856.90px;font-size:13px;line-height:13px;font-weight:400;color:#333;letter-spacing:0.45px;">(PELABUHAN KLANG)</div><svg style="position:absolute;left:309.9px;top:848.4px" width="8" height="14" viewBox="0 0 8 14"><circle cx="4" cy="4" r="3.9" fill="#c4c4c4"/><circle cx="2.9" cy="2.8" r="1" fill="#e4e4e4"/><rect x="3.2" y="8.2" width="1.6" height="5.6" fill="#c8c8c8"/></svg><svg style="position:absolute;left:307.2px;top:878px" width="12" height="12.5" viewBox="0 0 12 12.5"><rect x="0.2" y="2" width="11.6" height="10" rx="0.8" fill="#d7d7d7"/><rect x="1.0" y="5.0" width="1.75" height="1.6" fill="#fff"/><rect x="1.0" y="7.5" width="1.75" height="1.6" fill="#fff"/><rect x="1.0" y="10.0" width="1.75" height="1.6" fill="#fff"/><rect x="3.65" y="5.0" width="1.75" height="1.6" fill="#fff"/><rect x="3.65" y="7.5" width="1.75" height="1.6" fill="#fff"/><rect x="3.65" y="10.0" width="1.75" height="1.6" fill="#fff"/><rect x="6.3" y="5.0" width="1.75" height="1.6" fill="#fff"/><rect x="6.3" y="7.5" width="1.75" height="1.6" fill="#fff"/><rect x="6.3" y="10.0" width="1.75" height="1.6" fill="#fff"/><rect x="8.95" y="5.0" width="1.75" height="1.6" fill="#fff"/><rect x="8.95" y="7.5" width="1.75" height="1.6" fill="#fff"/><rect x="8.95" y="10.0" width="1.75" height="1.6" fill="#fff"/><rect x="2" y="0" width="2.3" height="3.6" rx="1.1" fill="#d7d7d7"/><rect x="7.6" y="0" width="2.3" height="3.6" rx="1.1" fill="#d7d7d7"/><rect x="2.75" y="0.7" width="0.8" height="1.8" fill="#fff"/><rect x="8.35" y="0.7" width="0.8" height="1.8" fill="#fff"/></svg><div class="t r" style="left:323.20px;top:879.34px;font-size:12px;line-height:12px;font-weight:400;color:#222;">10-10-2023</div><svg style="position:absolute;left:487px;top:861.5px" width="15" height="9" viewBox="0 0 15 9"><path d="M1,4.5 H13.5 M9.3,0.8 L13.5,4.5 L9.3,8.2" fill="none" stroke="#333" stroke-width="1.5"/></svg><div class="t r" style="left:535.80px;top:842.20px;font-size:13px;line-height:13px;font-weight:400;color:#333;letter-spacing:0.3px;">ORT KLANG</div><div class="t r" style="left:535.80px;top:856.90px;font-size:13px;line-height:13px;font-weight:400;color:#333;letter-spacing:0.45px;">(PELABUHAN KLANG)</div><svg style="position:absolute;left:520.5px;top:848.4px" width="8" height="14" viewBox="0 0 8 14"><circle cx="4" cy="4" r="3.9" fill="#c4c4c4"/><circle cx="2.9" cy="2.8" r="1" fill="#e4e4e4"/><rect x="3.2" y="8.2" width="1.6" height="5.6" fill="#c8c8c8"/></svg><svg style="position:absolute;left:518.2px;top:878px" width="12" height="12.5" viewBox="0 0 12 12.5"><rect x="0.2" y="2" width="11.6" height="10" rx="0.8" fill="#d7d7d7"/><rect x="1.0" y="5.0" width="1.75" height="1.6" fill="#fff"/><rect x="1.0" y="7.5" width="1.75" height="1.6" fill="#fff"/><rect x="1.0" y="10.0" width="1.75" height="1.6" fill="#fff"/><rect x="3.65" y="5.0" width="1.75" height="1.6" fill="#fff"/><rect x="3.65" y="7.5" width="1.75" height="1.6" fill="#fff"/><rect x="3.65" y="10.0" width="1.75" height="1.6" fill="#fff"/><rect x="6.3" y="5.0" width="1.75" height="1.6" fill="#fff"/><rect x="6.3" y="7.5" width="1.75" height="1.6" fill="#fff"/><rect x="6.3" y="10.0" width="1.75" height="1.6" fill="#fff"/><rect x="8.95" y="5.0" width="1.75" height="1.6" fill="#fff"/><rect x="8.95" y="7.5" width="1.75" height="1.6" fill="#fff"/><rect x="8.95" y="10.0" width="1.75" height="1.6" fill="#fff"/><rect x="2" y="0" width="2.3" height="3.6" rx="1.1" fill="#d7d7d7"/><rect x="7.6" y="0" width="2.3" height="3.6" rx="1.1" fill="#d7d7d7"/><rect x="2.75" y="0.7" width="0.8" height="1.8" fill="#fff"/><rect x="8.35" y="0.7" width="0.8" height="1.8" fill="#fff"/></svg><div class="t r" style="left:533.30px;top:879.34px;font-size:12px;line-height:12px;font-weight:400;color:#222;">10-30-2023</div><div class="t r" style="left:698.00px;top:842.54px;font-size:12px;line-height:12px;font-weight:400;color:#333;"><b>TT:</b> 20 days</div><div class="t r" style="left:830.30px;top:842.54px;font-size:12px;line-height:12px;font-weight:400;color:#333;letter-spacing:-0.02px;"><b>Service:</b> Direct</div><div class="t r" style="left:698.00px;top:865.54px;font-size:12px;line-height:12px;font-weight:400;color:#333;letter-spacing:0.065px;"><b>Validity:</b> 08-05-2024 ~ 08-015-2024</div><div class="t r" style="left:698.00px;top:888.14px;font-size:12px;line-height:12px;font-weight:400;color:#333;letter-spacing:0.16px;"><b>Via:</b> Ho Chi Minh City, Vung Tau</div><svg style="position:absolute;left:307.1px;top:926.8px" width="9" height="6" viewBox="0 0 9 6"><polyline points="1,1 4.5,5 8,1" fill="none" stroke="#5d9cd4" stroke-width="1.05"/></svg><div class="t" style="left:320.30px;top:924.34px;font-size:12px;line-height:12px;font-weight:700;color:#5b9bd3;letter-spacing:0.17px;">Detail Cost</div><svg style="position:absolute;left:402.1px;top:926.8px" width="9" height="6" viewBox="0 0 9 6"><polyline points="1,1 4.5,5 8,1" fill="none" stroke="#5d9cd4" stroke-width="1.05"/></svg><div class="t" style="left:415.30px;top:924.34px;font-size:12px;line-height:12px;font-weight:700;color:#5b9bd3;letter-spacing:0.03px;">Schedule</div><svg style="position:absolute;left:484.8px;top:926.8px" width="9" height="6" viewBox="0 0 9 6"><polyline points="1,1 4.5,5 8,1" fill="none" stroke="#5d9cd4" stroke-width="1.05"/></svg><div class="t" style="left:498.00px;top:924.34px;font-size:12px;line-height:12px;font-weight:700;color:#5b9bd3;">D&amp;D</div><svg style="position:absolute;left:541.0px;top:926.8px" width="9" height="6" viewBox="0 0 9 6"><polyline points="1,1 4.5,5 8,1" fill="none" stroke="#5d9cd4" stroke-width="1.05"/></svg><div class="t" style="left:554.20px;top:924.34px;font-size:12px;line-height:12px;font-weight:700;color:#5b9bd3;letter-spacing:0.35px;">Remark</div><div class="t r" style="left:1002.80px;top:831.84px;font-size:12px;line-height:12px;font-weight:400;color:#222;letter-spacing:-0.45px;">20GP</div><div class="t" style="left:1079.40px;top:830.56px;font-size:16px;line-height:16px;font-weight:700;color:#0a8077;letter-spacing:0.3px;">1781.53</div><div class="t" style="left:1155.30px;top:832.27px;font-size:11.5px;line-height:11.5px;font-weight:400;color:#ababab;letter-spacing:-0.75px;">USD</div><div class="t r" style="left:1002.80px;top:862.84px;font-size:12px;line-height:12px;font-weight:400;color:#222;letter-spacing:-0.45px;">40GP</div><div class="t" style="left:1079.40px;top:861.56px;font-size:16px;line-height:16px;font-weight:700;color:#0a8077;letter-spacing:0.3px;">1781.53</div><div class="t" style="left:1155.30px;top:863.27px;font-size:11.5px;line-height:11.5px;font-weight:400;color:#ababab;letter-spacing:-0.75px;">USD</div><div class="t r" style="left:1002.80px;top:893.84px;font-size:12px;line-height:12px;font-weight:400;color:#222;letter-spacing:-0.45px;">40HC</div><div class="t" style="left:1079.40px;top:892.56px;font-size:16px;line-height:16px;font-weight:700;color:#0a8077;letter-spacing:0.3px;">1781.53</div><div class="t" style="left:1155.30px;top:894.27px;font-size:11.5px;line-height:11.5px;font-weight:400;color:#ababab;letter-spacing:-0.75px;">USD</div><div style="position:absolute;left:1250.5px;top:851px;width:116px;height:33px;box-sizing:border-box;border:1.5px solid #c9c9c9;background:#fff;"></div><div class="t r" style="left:1264.50px;top:861.85px;font-size:14px;line-height:14px;font-weight:400;color:#333;letter-spacing:0.4px;">Add to Quote</div><div style="position:absolute;left:167px;top:978px;width:1232px;height:186px;box-sizing:border-box;background:#fff;border:1px solid #dfe1e5;border-radius:8px;box-shadow:0 0 0 1px #eef0f3;"></div><div style="position:absolute;left:282px;top:979px;width:1px;height:185px;background:#dedede;"></div><div style="position:absolute;left:979px;top:979px;width:1px;height:185px;background:#dedede;"></div><div style="position:absolute;left:1219px;top:979px;width:1px;height:185px;background:#dedede;"></div><svg style="position:absolute;left:179.8px;top:1061.0px" width="19" height="20" viewBox="0 0 19 20"><rect x="0" y="0" width="19" height="20" rx="2.2" fill="#00b3d6"/><polygon points="9.50,2.70 8.11,7.42 3.56,5.56 6.38,9.59 2.09,11.99 7.00,12.30 6.20,17.15 9.50,13.50 12.80,17.15 12.00,12.30 16.91,11.99 12.62,9.59 15.44,5.56 10.89,7.42" fill="#fff"/></svg><div class="t" style="left:206.30px;top:1065.73px;font-size:12.6px;line-height:12.6px;font-weight:700;color:#0a0a0a;letter-spacing:0.25px;transform:scaleX(1.15);transform-origin:0 100%;-webkit-text-stroke:0.25px #0a0a0a;">MAERSK</div><div class="t" style="left:307.30px;top:1005.06px;font-size:16px;line-height:16px;font-weight:700;color:#333;letter-spacing:0.65px;">Maersk</div><div class="t r" style="left:382.20px;top:1007.07px;font-size:11.5px;line-height:11.5px;font-weight:400;color:#222;letter-spacing:-0.25px;">CONTRACT</div><svg style="position:absolute;left:461.4px;top:1007px" width="15" height="13.5" viewBox="0 0 15 13.5"><path d="M5.2,0 H15 V10 H5.2 Z" fill="#428bca"/><path d="M0,10.2 V5.6 Q0,2.4 3.4,2.1 H5.6 V10.2 Z" fill="#428bca"/><path d="M1.4,5.9 Q1.8,4 3.6,3.8 H5.2 V5.9 Z" fill="#fff"/><circle cx="3.7" cy="10.6" r="2.6" fill="#428bca"/><circle cx="11.7" cy="10.6" r="2.6" fill="#428bca"/><circle cx="3.7" cy="10.6" r="1" fill="#fff"/><circle cx="11.7" cy="10.6" r="1" fill="#fff"/><rect x="0" y="9" width="15" height="1.6" fill="#428bca"/></svg><div class="t r" style="left:325.00px;top:1045.20px;font-size:13px;line-height:13px;font-weight:400;color:#333;letter-spacing:0.3px;">ORT KLANG</div><div class="t r" style="left:325.00px;top:1059.90px;font-size:13px;line-height:13px;font-weight:400;color:#333;letter-spacing:0.45px;">(PELABUHAN KLANG)</div><svg style="position:absolute;left:309.9px;top:1051.4px" width="8" height="14" viewBox="0 0 8 14"><circle cx="4" cy="4" r="3.9" fill="#c4c4c4"/><circle cx="2.9" cy="2.8" r="1" fill="#e4e4e4"/><rect x="3.2" y="8.2" width="1.6" height="5.6" fill="#c8c8c8"/></svg><svg style="position:absolute;left:307.2px;top:1081px" width="12" height="12.5" viewBox="0 0 12 12.5"><rect x="0.2" y="2" width="11.6" height="10" rx="0.8" fill="#d7d7d7"/><rect x="1.0" y="5.0" width="1.75" height="1.6" fill="#fff"/><rect x="1.0" y="7.5" width="1.75" height="1.6" fill="#fff"/><rect x="1.0" y="10.0" width="1.75" height="1.6" fill="#fff"/><rect x="3.65" y="5.0" width="1.75" height="1.6" fill="#fff"/><rect x="3.65" y="7.5" width="1.75" height="1.6" fill="#fff"/><rect x="3.65" y="10.0" width="1.75" height="1.6" fill="#fff"/><rect x="6.3" y="5.0" width="1.75" height="1.6" fill="#fff"/><rect x="6.3" y="7.5" width="1.75" height="1.6" fill="#fff"/><rect x="6.3" y="10.0" width="1.75" height="1.6" fill="#fff"/><rect x="8.95" y="5.0" width="1.75" height="1.6" fill="#fff"/><rect x="8.95" y="7.5" width="1.75" height="1.6" fill="#fff"/><rect x="8.95" y="10.0" width="1.75" height="1.6" fill="#fff"/><rect x="2" y="0" width="2.3" height="3.6" rx="1.1" fill="#d7d7d7"/><rect x="7.6" y="0" width="2.3" height="3.6" rx="1.1" fill="#d7d7d7"/><rect x="2.75" y="0.7" width="0.8" height="1.8" fill="#fff"/><rect x="8.35" y="0.7" width="0.8" height="1.8" fill="#fff"/></svg><div class="t r" style="left:323.20px;top:1082.34px;font-size:12px;line-height:12px;font-weight:400;color:#222;">10-10-2023</div><svg style="position:absolute;left:487px;top:1064.5px" width="15" height="9" viewBox="0 0 15 9"><path d="M1,4.5 H13.5 M9.3,0.8 L13.5,4.5 L9.3,8.2" fill="none" stroke="#333" stroke-width="1.5"/></svg><div class="t r" style="left:535.80px;top:1045.20px;font-size:13px;line-height:13px;font-weight:400;color:#333;letter-spacing:0.3px;">ORT KLANG</div><div class="t r" style="left:535.80px;top:1059.90px;font-size:13px;line-height:13px;font-weight:400;color:#333;letter-spacing:0.45px;">(PELABUHAN KLANG)</div><svg style="position:absolute;left:520.5px;top:1051.4px" width="8" height="14" viewBox="0 0 8 14"><circle cx="4" cy="4" r="3.9" fill="#c4c4c4"/><circle cx="2.9" cy="2.8" r="1" fill="#e4e4e4"/><rect x="3.2" y="8.2" width="1.6" height="5.6" fill="#c8c8c8"/></svg><svg style="position:absolute;left:518.2px;top:1081px" width="12" height="12.5" viewBox="0 0 12 12.5"><rect x="0.2" y="2" width="11.6" height="10" rx="0.8" fill="#d7d7d7"/><rect x="1.0" y="5.0" width="1.75" height="1.6" fill="#fff"/><rect x="1.0" y="7.5" width="1.75" height="1.6" fill="#fff"/><rect x="1.0" y="10.0" width="1.75" height="1.6" fill="#fff"/><rect x="3.65" y="5.0" width="1.75" height="1.6" fill="#fff"/><rect x="3.65" y="7.5" width="1.75" height="1.6" fill="#fff"/><rect x="3.65" y="10.0" width="1.75" height="1.6" fill="#fff"/><rect x="6.3" y="5.0" width="1.75" height="1.6" fill="#fff"/><rect x="6.3" y="7.5" width="1.75" height="1.6" fill="#fff"/><rect x="6.3" y="10.0" width="1.75" height="1.6" fill="#fff"/><rect x="8.95" y="5.0" width="1.75" height="1.6" fill="#fff"/><rect x="8.95" y="7.5" width="1.75" height="1.6" fill="#fff"/><rect x="8.95" y="10.0" width="1.75" height="1.6" fill="#fff"/><rect x="2" y="0" width="2.3" height="3.6" rx="1.1" fill="#d7d7d7"/><rect x="7.6" y="0" width="2.3" height="3.6" rx="1.1" fill="#d7d7d7"/><rect x="2.75" y="0.7" width="0.8" height="1.8" fill="#fff"/><rect x="8.35" y="0.7" width="0.8" height="1.8" fill="#fff"/></svg><div class="t r" style="left:533.30px;top:1082.34px;font-size:12px;line-height:12px;font-weight:400;color:#222;">10-30-2023</div><div class="t r" style="left:698.00px;top:1045.54px;font-size:12px;line-height:12px;font-weight:400;color:#333;"><b>TT:</b> 20 days</div><div class="t r" style="left:830.30px;top:1045.54px;font-size:12px;line-height:12px;font-weight:400;color:#333;letter-spacing:-0.02px;"><b>Service:</b> Direct</div><div class="t r" style="left:698.00px;top:1068.54px;font-size:12px;line-height:12px;font-weight:400;color:#333;letter-spacing:0.065px;"><b>Validity:</b> 08-05-2024 ~ 08-015-2024</div><div class="t r" style="left:698.00px;top:1091.14px;font-size:12px;line-height:12px;font-weight:400;color:#333;letter-spacing:0.16px;"><b>Via:</b> Ho Chi Minh City, Vung Tau</div><svg style="position:absolute;left:307.1px;top:1129.8px" width="9" height="6" viewBox="0 0 9 6"><polyline points="1,1 4.5,5 8,1" fill="none" stroke="#5d9cd4" stroke-width="1.05"/></svg><div class="t" style="left:320.30px;top:1127.34px;font-size:12px;line-height:12px;font-weight:700;color:#5b9bd3;letter-spacing:0.17px;">Detail Cost</div><svg style="position:absolute;left:402.1px;top:1129.8px" width="9" height="6" viewBox="0 0 9 6"><polyline points="1,1 4.5,5 8,1" fill="none" stroke="#5d9cd4" stroke-width="1.05"/></svg><div class="t" style="left:415.30px;top:1127.34px;font-size:12px;line-height:12px;font-weight:700;color:#5b9bd3;letter-spacing:0.35px;">Remark</div><div class="t r" style="left:1002.80px;top:1034.84px;font-size:12px;line-height:12px;font-weight:400;color:#222;letter-spacing:-0.45px;">20GP</div><div class="t" style="left:1079.40px;top:1033.56px;font-size:16px;line-height:16px;font-weight:700;color:#0a8077;letter-spacing:0.3px;">1781.53</div><div class="t" style="left:1155.30px;top:1035.27px;font-size:11.5px;line-height:11.5px;font-weight:400;color:#ababab;letter-spacing:-0.75px;">USD</div><div class="t r" style="left:1002.80px;top:1065.84px;font-size:12px;line-height:12px;font-weight:400;color:#222;letter-spacing:-0.45px;">40GP</div><div class="t" style="left:1079.40px;top:1064.56px;font-size:16px;line-height:16px;font-weight:700;color:#0a8077;letter-spacing:0.3px;">1781.53</div><div class="t" style="left:1155.30px;top:1066.27px;font-size:11.5px;line-height:11.5px;font-weight:400;color:#ababab;letter-spacing:-0.75px;">USD</div><div class="t r" style="left:1002.80px;top:1096.84px;font-size:12px;line-height:12px;font-weight:400;color:#222;letter-spacing:-0.45px;">40HC</div><div class="t" style="left:1079.40px;top:1095.56px;font-size:16px;line-height:16px;font-weight:700;color:#0a8077;letter-spacing:0.3px;">1781.53</div><div class="t" style="left:1155.30px;top:1097.27px;font-size:11.5px;line-height:11.5px;font-weight:400;color:#ababab;letter-spacing:-0.75px;">USD</div><div style="position:absolute;left:1250.5px;top:1054px;width:116px;height:33px;box-sizing:border-box;border:1.5px solid #c9c9c9;background:#fff;"></div><div class="t r" style="left:1264.50px;top:1064.85px;font-size:14px;line-height:14px;font-weight:400;color:#333;letter-spacing:0.4px;">Add to Quote</div></div>
</body></html>
